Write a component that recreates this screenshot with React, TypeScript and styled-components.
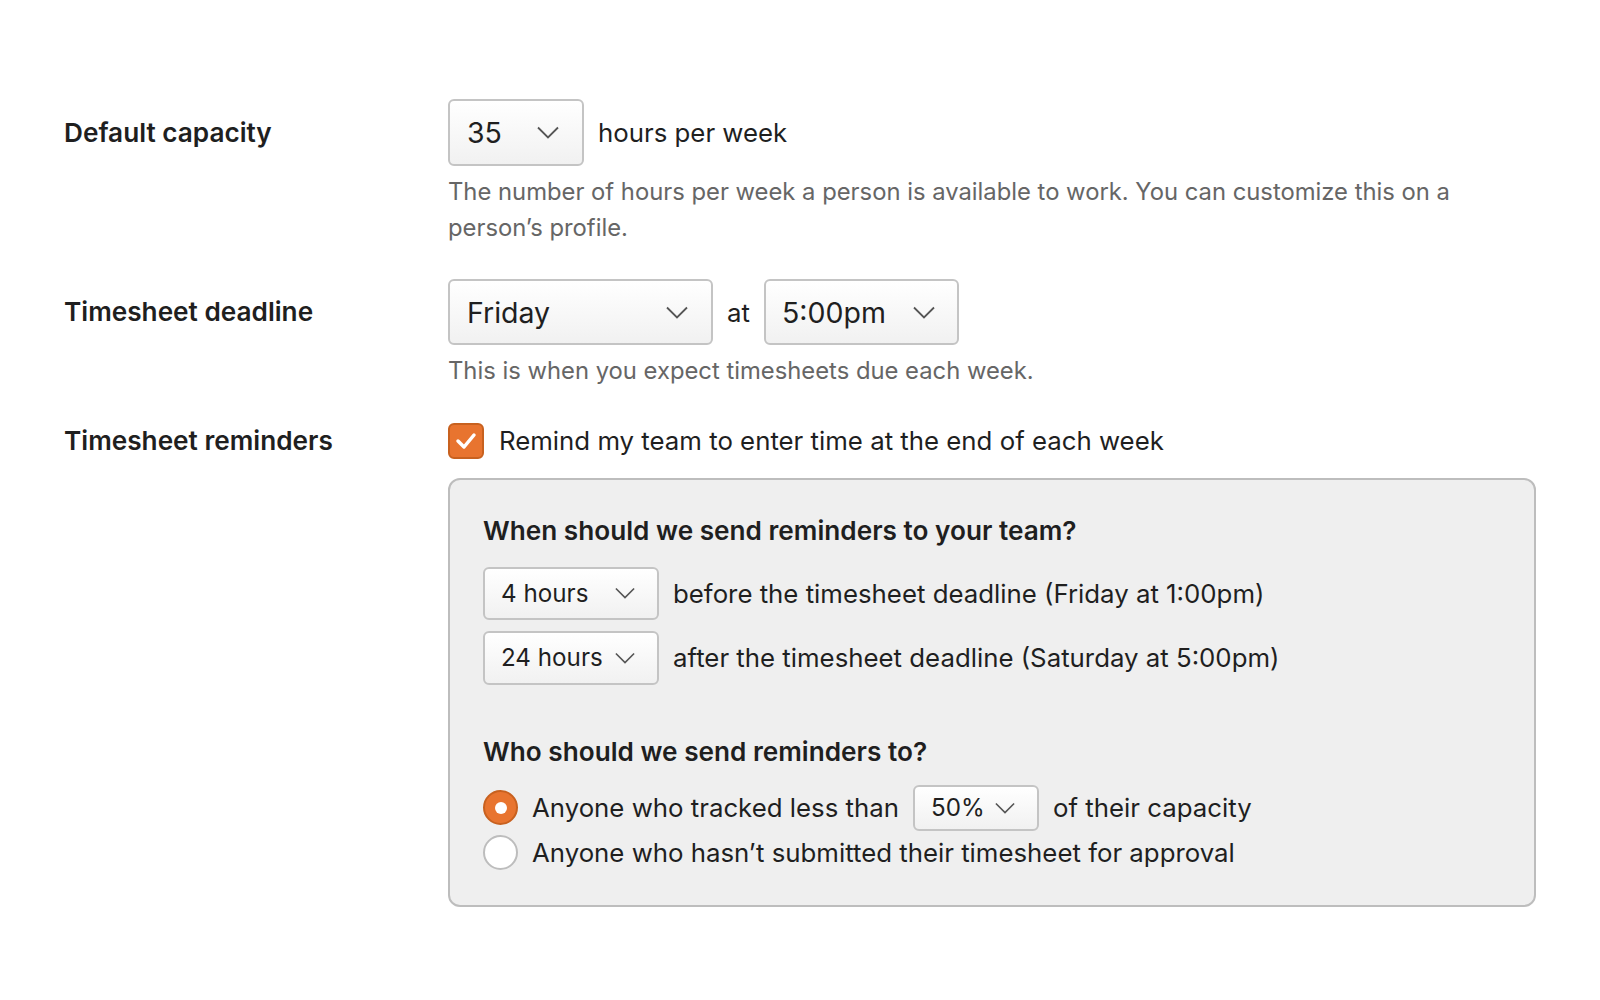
import React from "react";
import styled, { createGlobalStyle } from "styled-components";

const Global = createGlobalStyle`
  html, body { margin: 0; padding: 0; background: #ffffff; }
  body { font-family: Inter, "Noto Sans", sans-serif; color: #1f1f1f; }
`;

const Page = styled.div`
  padding: 99px 64px 0 64px;
  display: flex;
  flex-direction: column;
  gap: 34px;
`;

const Row = styled.div`
  display: grid;
  grid-template-columns: 384px 1088px;
  align-items: start;
`;

const Label = styled.div<{ $h: number }>`
  font-size: 26.2px;
  font-weight: 600;
  line-height: ${(p) => p.$h}px;
  color: #1f1f1f;
`;

const Field = styled.div`
  display: flex;
  flex-direction: column;
`;

const Inline = styled.div<{ $gap?: number }>`
  display: flex;
  align-items: center;
  gap: ${(p) => p.$gap ?? 14}px;
`;

const Text = styled.span<{ $size?: number }>`
  font-size: ${(p) => p.$size ?? 25.8}px;
  color: #1f1f1f;
  white-space: nowrap;
`;

const Help = styled.p`
  margin: 8px 0 0 0;
  font-size: 23.8px;
  line-height: 35.5px;
  color: #666666;
`;

const SelectBox = styled.div<{ $w: number; $h: number; $size: number; $pad: number }>`
  box-sizing: border-box;
  width: ${(p) => p.$w}px;
  height: ${(p) => p.$h}px;
  padding: 0 ${(p) => p.$pad + 6}px 0 ${(p) => p.$pad}px;
  display: flex;
  align-items: center;
  justify-content: space-between;
  border: 2px solid #c4c4c4;
  border-radius: 6px;
  background: linear-gradient(#ffffff, #f1f1f1);
  font-size: ${(p) => p.$size}px;
  color: #1f1f1f;
  flex-shrink: 0;
`;

const Chevron = styled.svg`
  flex-shrink: 0;
`;

function Select({
  value,
  w,
  h,
  size,
  pad,
  cw,
}: {
  value: string;
  w: number;
  h: number;
  size: number;
  pad: number;
  cw: number;
}) {
  return (
    <SelectBox $w={w} $h={h} $size={size} $pad={pad}>
      <span>{value}</span>
      <Chevron width={cw} height={cw / 2 + 2} viewBox="0 0 22 12">
        <polyline points="1,1 11,11 21,1" fill="none" stroke="#555" strokeWidth="1.8" />
      </Chevron>
    </SelectBox>
  );
}

const CheckRow = styled.div`
  display: flex;
  align-items: center;
  gap: 15px;
  height: 36px;
`;

const Checkbox = styled.div`
  box-sizing: border-box;
  width: 36px;
  height: 36px;
  border-radius: 6px;
  background: #e8742f;
  border: 2px solid #c8611f;
  display: flex;
  align-items: center;
  justify-content: center;
`;

const Panel = styled.div`
  margin-top: 19px;
  box-sizing: border-box;
  width: 1088px;
  border: 2px solid #bdbdbd;
  border-radius: 12px;
  background: #efefef;
  padding: 33px 32px 34px 33px;
  display: flex;
  flex-direction: column;
`;

const Heading = styled.div<{ $mt?: number }>`
  font-size: 26.2px;
  font-weight: 600;
  line-height: 36px;
  margin-top: ${(p) => p.$mt ?? 0}px;
`;

const Stack = styled.div<{ $gap: number; $mt: number }>`
  display: flex;
  flex-direction: column;
  gap: ${(p) => p.$gap}px;
  margin-top: ${(p) => p.$mt}px;
`;

const Radio = styled.div<{ $on?: boolean }>`
  box-sizing: border-box;
  width: 35px;
  height: 35px;
  border-radius: 50%;
  flex-shrink: 0;
  background: ${(p) => (p.$on ? "#e8742f" : "#ffffff")};
  border: 2px solid ${(p) => (p.$on ? "#c8611f" : "#bdbdbd")};
  display: flex;
  align-items: center;
  justify-content: center;
  &::after {
    content: "";
    display: ${(p) => (p.$on ? "block" : "none")};
    width: 12px;
    height: 12px;
    border-radius: 50%;
    background: #ffffff;
  }
`;

const RadioRow = styled.div<{ $h: number }>`
  display: flex;
  align-items: center;
  gap: 14px;
  height: ${(p) => p.$h}px;
`;

export default function App() {
  return (
    <>
      <Global />
      <Page>
        <Row>
          <Label $h={67}>Default capacity</Label>
          <Field>
            <Inline>
              <Select value="35" w={136} h={67} size={28.5} pad={17} cw={22} />
              <Text>hours per week</Text>
            </Inline>
            <Help>
              The number of hours per week a person is available to work. You can customize this on a
              person’s profile.
            </Help>
          </Field>
        </Row>
        <Row>
          <Label $h={66}>Timesheet deadline</Label>
          <Field>
            <Inline>
              <Select value="Friday" w={265} h={66} size={28.5} pad={17} cw={22} />
              <Text>at</Text>
              <Select value="5:00pm" w={195} h={66} size={28.5} pad={16} cw={22} />
            </Inline>
            <Help>This is when you expect timesheets due each week.</Help>
          </Field>
        </Row>
        <Row>
          <Label $h={36}>Timesheet reminders</Label>
          <Field>
            <CheckRow>
              <Checkbox>
                <svg width="22" height="18" viewBox="0 0 22 18">
                  <polyline
                    points="3,9 9,15 19,3"
                    fill="none"
                    stroke="#fff"
                    strokeWidth="3.5"
                    strokeLinecap="round"
                    strokeLinejoin="round"
                  />
                </svg>
              </Checkbox>
              <Text>Remind my team to enter time at the end of each week</Text>
            </CheckRow>
            <Panel>
              <Heading>When should we send reminders to your team?</Heading>
              <Stack $gap={11} $mt={18}>
                <Inline>
                  <Select value="4 hours" w={176} h={53} size={24.2} pad={16} cw={20} />
                  <Text>before the timesheet deadline (Friday at 1:00pm)</Text>
                </Inline>
                <Inline>
                  <Select value="24 hours" w={176} h={54} size={24.2} pad={16} cw={20} />
                  <Text>after the timesheet deadline (Saturday at 5:00pm)</Text>
                </Inline>
              </Stack>
              <Heading $mt={49}>Who should we send reminders to?</Heading>
              <Stack $gap={4} $mt={15}>
                <RadioRow $h={46}>
                  <Radio $on />
                  <Text>Anyone who tracked less than</Text>
                  <Select value="50%" w={126} h={46} size={24.2} pad={16} cw={20} />
                  <Text>of their capacity</Text>
                </RadioRow>
                <RadioRow $h={36}>
                  <Radio />
                  <Text>Anyone who hasn’t submitted their timesheet for approval</Text>
                </RadioRow>
              </Stack>
            </Panel>
          </Field>
        </Row>
      </Page>
    </>
  );
}
